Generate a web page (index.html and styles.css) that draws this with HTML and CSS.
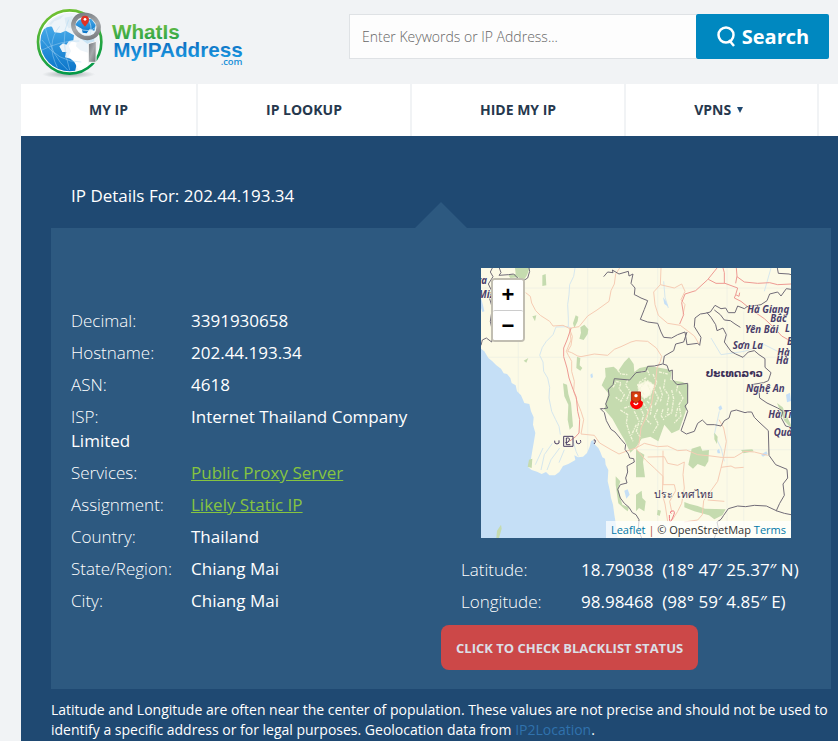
FILE: index.html
```html
<!DOCTYPE html>
<html lang="en">
<head>
<meta charset="utf-8">
<title>IP Details For: 202.44.193.34</title>
<link rel="stylesheet" href="styles.css">
</head>
<body>
<header class="header">
  <a class="logo" href="#" aria-label="WhatIsMyIPAddress.com">
    <svg class="logo-art" viewBox="0 0 720 252" role="img" aria-label="WhatIsMyIPAddress.com">
      <defs>
        <linearGradient id="ring" x1="0" y1="0" x2="0.3" y2="1"><stop offset="0" stop-color="#7cc52f"/><stop offset="1" stop-color="#069a48"/></linearGradient>
        <linearGradient id="sea" x1="0" y1="0" x2="0" y2="1"><stop offset="0" stop-color="#45a8e8"/><stop offset="1" stop-color="#0873c8"/></linearGradient>
        <linearGradient id="green" x1="0" y1="0" x2="0" y2="1"><stop offset="0" stop-color="#7cc342"/><stop offset="1" stop-color="#1fa04a"/></linearGradient>
        <linearGradient id="blue" x1="0" y1="0" x2="0" y2="1"><stop offset="0" stop-color="#0a63b8"/><stop offset="1" stop-color="#1b9fe6"/></linearGradient>
        <linearGradient id="steel" x1="0" y1="0" x2="1" y2="1"><stop offset="0" stop-color="#707479"/><stop offset=".5" stop-color="#a6a9ac"/><stop offset="1" stop-color="#6f7276"/></linearGradient>
        <radialGradient id="shade"><stop offset="0" stop-color="#8f969b" stop-opacity=".8"/><stop offset="1" stop-color="#8f969b" stop-opacity="0"/></radialGradient>
        <clipPath id="globe"><circle cx="149" cy="126" r="88"/></clipPath>
      </defs>
      <ellipse cx="146" cy="223" rx="80" ry="12" fill="url(#shade)"/>
      <circle cx="149" cy="126" r="95" fill="#fff" stroke="url(#ring)" stroke-width="8"/>
      <g clip-path="url(#globe)">
        <circle cx="149" cy="126" r="88" fill="#edf4f9"/>
        <path d="M58 112L72 88Q82 78 96 80L103 97L122 99L137 92L162 106L160 121L147 123L139 134L129 130L118 139L127 156L139 156L135 172L152 176L170 192L164 220L112 216L74 192L56 151Z" fill="url(#sea)"/>
        <path d="M87 72Q105 50 132 45L121 57L103 64L93 75ZM134 53L158 48L158 81L146 85L136 69Z" fill="#ddebf4"/>
        <path d="M156 123L170 129L168 139L181 151L204 158L205 195L176 210L162 184L145 170L153 153L146 137Z" fill="#fff"/>
        <path d="M180 58Q204 72 220 104L226 142L200 130L180 115Z" fill="#c7e3f4"/>
        <path d="M66 120Q115 188 184 186M76 84Q95 170 144 211M119 79Q76 131 112 202M146 59Q118 112 149 210M64 151Q126 120 178 123" fill="none" stroke="#a8d6f4" stroke-width="2" opacity=".7"/>
      </g>
      <path d="M205 131L229 124L228 187L205 187Z" fill="url(#steel)" stroke="#f7f8f8" stroke-width="3"/>
      <ellipse cx="198" cy="79" rx="39" ry="34" transform="rotate(25 198 79)" fill="#eaf4fa" stroke="url(#steel)" stroke-width="13"/>
      <path d="M166 75Q174 56 191 56L214 57L227 75L223 92L209 88L200 100L188 98L185 86Z" fill="url(#sea)"/>
      <path d="M175 85Q207 100 227 82M203 55Q218 76 211 104" fill="none" stroke="#c5e5f6" stroke-width="2"/>
      <path d="M195 80C187 70 183 66 183 59A12 12 0 0 1 207 59C207 66 203 70 195 80Z" fill="#df3124"/>
      <circle cx="195" cy="58" r="4" fill="#fff"/>
      <text class="logo-word" x="276" y="116" fill="url(#green)">WhatIs</text>
      <text class="logo-word" x="280" y="170" fill="url(#blue)">MyIPAddress</text>
      <text class="logo-com" x="602" y="194" fill="#168fd8">.com</text>
    </svg>
  </a>
  <form class="search">
    <input class="search-input" type="text" aria-label="Search" placeholder="Enter Keywords or IP Address...">
    <button class="search-button" type="button">
      <svg class="search-icon" viewBox="0 0 20 22" aria-hidden="true"><circle cx="10" cy="9" r="7.5"/><path d="M13 14L18 20"/></svg>
      Search
    </button>
  </form>
</header>
<nav class="nav">
  <a href="#">MY IP</a>
  <a href="#">IP LOOKUP</a>
  <a href="#">HIDE MY IP</a>
  <a class="has-menu" href="#">VPNS <span class="caret"></span></a>
</nav>
<main class="details">
  <h1 class="title">IP Details For: 202.44.193.34</h1>
  <section class="panel">
    <div class="facts">
      <p><span class="label">Decimal:</span>3391930658</p>
      <p><span class="label">Hostname:</span>202.44.193.34</p>
      <p><span class="label">ASN:</span>4618</p>
      <p><span class="label">ISP:</span>Internet Thailand Company Limited</p>
      <p><span class="label">Services:</span><a href="#">Public Proxy Server</a></p>
      <p><span class="label">Assignment:</span><a href="#">Likely Static IP</a></p>
      <p><span class="label">Country:</span>Thailand</p>
      <p><span class="label">State/Region:</span>Chiang Mai</p>
      <p><span class="label">City:</span>Chiang Mai</p>
    </div>
    <div class="place">
      <div class="map">
        <svg class="map-art" viewBox="0 0 930 810" preserveAspectRatio="xMidYMid slice" role="img" aria-label="Map of Thailand">
          <rect width="930" height="810" fill="#fcfae6"/>
          <g class="grid"><path d="M112 0V400M320 0V560M530 0V810M738 0V810M0 268H930M0 60H930M465 545H930M788 130V810"/></g>
          <path class="water" d="M0 242L10 250L22 270L34 280L46 292L60 302L68 316L78 318L88 330L92 345L104 352L108 370L120 382L130 405L145 408L150 430L158 448L156 470L163 495L158 525L154 548L150 572L141 597L152 606L168 611L182 618L195 612L205 622L222 622L235 612L246 594L262 588L283 576L280 562L291 568L306 566L318 555L326 536L330 520L336 516L342 530L352 540L358 552L364 568L372 572L374 590L382 606L380 640L386 665L390 690L396 710L400 740L404 765L410 810L0 810Z"/>
          <path class="water" d="M96 402L104 412L113 404L112 398ZM0 90L6 112L10 130L4 132L0 120Z"/>
          <g class="stream"><path d="M282 0L278 25L266 50L264 80L260 110L262 150L262 176L225 177L216 200L196 220L184 238L176 262L186 282L188 310L200 330L206 358L204 390L212 430L224 455L234 475L238 500M262 176L272 182M214 526L190 560L180 606M236 540L210 575L198 606M250 545L234 584M186 540L163 590M274 510L285 550L292 565M548 40L552 88L562 120M690 210L720 260L790 250L850 230L910 260M715 430L700 500L720 540L730 580M870 0L850 70"/></g>
          <path class="pond" d="M328 320l6-4 2 12-6 2zM712 418l8-6 4 10-8 6zM708 548l6-6 4 14-8 0zM840 560l16-10 4 8-14 8zM430 668l10-4 6 16-10 12zM472 690l8 4 2 22-8-4zM915 380l12-6 3 25-12 4zM546 88l8 10 8 18-12-8z"/>
          <g class="forest">
            <path d="M102 0H146L138 22L126 40L112 28L88 30L82 22L104 18Z"/>
            <path d="M184 22L194 18L196 52L184 54ZM284 142L292 146L290 160L280 180L276 166ZM298 178L310 170L322 184L320 198L308 216L295 212L300 194ZM288 266L298 270L296 292L304 300L298 308L286 300ZM246 346L258 350L262 378L270 405L276 475L266 485L260 455L262 410L250 385ZM154 145L166 142L162 160ZM128 278L142 270L136 284ZM144 575L154 572L152 600L140 596ZM46 810L48 788L60 770L62 782L54 810Z"/>
            <path d="M362 352L374 326L372 300L398 296L412 308L430 282L444 268L458 288L460 312L476 300L506 294L560 304L572 310L568 336L604 342L622 350L620 390L614 430L595 485L572 496L550 470L532 520L508 506L482 512L466 536L448 554L430 515L414 488L394 452L370 424L382 376Z"/>
            <path d="M404 625L418 640L412 660L418 690L424 710L444 718L440 730L430 722L412 706L404 650ZM465 545L490 560L486 582L492 628L465 628ZM632 542L658 534L664 548L684 546L682 580L672 596L650 588L636 602L622 590ZM610 702L626 708L650 714L672 722L734 724L724 742L700 754L684 742L640 730L610 718ZM700 494l10 12-2 22-8-14zM780 546l34-2 4 6-30 6z"/>
            <path d="M465 680L482 668L484 690L494 700L490 730L474 720L465 730ZM888 405L905 418L920 450L930 470L930 480L910 458ZM530 725l10 3-4 16-8-4z"/>
          </g>
          <g class="clearing"><path d="M470 350L500 338L520 352L508 380L490 392L474 372Z" fill="#fcfae6"/><path d="M396 358L406 340L420 344L414 362L430 380L420 400L404 388M440 336L434 352L448 370L436 398M474 344L494 330L490 345L476 362L490 380M516 318L528 344L518 362L532 390L522 412M552 334L548 360L564 384L558 412M572 366L578 392L572 434L550 448M488 406L502 430L496 455L512 470M530 424L520 446L532 468L516 494M418 426L440 440L436 464L446 498L456 520M460 430L474 460L466 490L480 510M484 394L476 415L488 440L480 470M594 370L606 390L594 410L600 444L580 465M500 350L510 370L506 395M464 385L452 405L460 425M546 424L540 442L550 458M430 420L448 414M410 306L420 318L440 320M480 312L500 308L506 322M534 312L560 318M590 352L586 372M536 356L544 380L538 400M562 420L558 440M498 400L512 412L508 440M590 420L584 446M466 470L452 500"/></g>
          <g class="road minor"><path d="M134 74L148 85L152 105L164 128L178 142L206 160L216 174L246 172L265 181L294 176L320 144L348 126L384 100L390 68L400 48L404 18L416 0M265 181L274 205L270 232L260 250L272 254L290 264L300 266L340 258L380 262L400 244L420 236L450 222L465 218L500 220L526 240L542 265L538 280L528 300L524 340L516 380L512 405L496 446L480 480L474 528L465 542M265 181L270 216L256 250L262 262L272 280L272 310L280 340L278 370L290 405L300 430L308 455L300 498L340 502L356 525L390 545L414 558L440 548L465 540L490 526L530 536L560 534L590 548L616 546L650 560L690 564L720 568L760 568L790 550L820 552L860 562M540 0L538 50L518 72L522 110L532 142L560 166L598 172L640 204L654 228M538 50L580 60L602 48L612 70L600 95L612 110L606 140M465 542L494 576L520 600L546 625L544 680L552 708L560 760M546 548L546 650L580 650L584 668L566 700L572 730M500 567L550 566L560 586L590 592L610 582L606 620L610 660L602 706L590 730L574 756M714 455L728 480L736 520L728 566L720 600L710 640L690 668L668 698L664 740L650 756L610 762M720 598L750 594L762 600L788 598M680 696L730 700"/></g>
          <g class="road main"><path d="M270 181L258 216L248 240L248 266L258 300L264 330L276 364L286 388L290 430L296 455L294 495L284 506L265 520M596 168L608 140L602 104L612 78L644 68L680 35L708 0M682 34L705 46L732 46L770 60L764 80L760 90L780 100L812 126L850 152L882 182L902 204L930 220M726 0L730 14V45M766 0L768 24L764 46M768 26L790 42L830 46L866 44L890 50L930 48M764 80L774 85L776 74"/></g>
          <g class="border"><path d="M0 232L4 216L16 210L32 222L36 198L28 160L34 120L26 92L32 68L22 48L36 26L28 12L34 0M55 0L60 14L54 22L82 20L98 18L110 30L124 40L140 30L146 10L144 0M368 26L380 12L396 14L394 6L414 18L442 10L444 24L456 18L450 46L462 60L460 80L465 82L480 90L500 98L490 124L478 154L500 162L530 166L540 192L548 208L572 210L590 200L612 192L618 230L650 226L656 232L660 208L640 176L642 150L658 138L672 136L688 132L702 112L720 122L734 120L742 134L762 134L770 114L790 122L798 116M798 116L840 110L858 98L866 78L890 72L900 84L916 62L930 64M678 134L690 148L704 170L708 188L726 180L736 200L730 222L750 250L764 258L786 268L802 252L820 248L834 260L852 272L852 298L870 314L862 338L848 344L810 350L834 370L836 390L858 405L890 420L906 430L900 448L914 474L930 478M700 126L718 140L730 156L748 158L762 168L778 178M889 0L892 16L924 18L930 20M618 192L608 222L584 228L578 248L550 264L546 288L558 292L564 310L574 306L574 334L588 350L620 346L620 405L612 414L620 430L610 460L600 488L616 498L640 490L650 466L664 456L678 470L700 470L720 474L730 458L744 450L750 430L766 426L792 434L800 432L812 432L820 448L834 462L862 488L864 562L884 590L918 604L920 630L906 648L910 682L896 706L886 728L856 714L820 712L794 716L770 714L742 722L728 742L720 754L708 762L712 780L700 810M545 288L520 294L500 295L494 310L465 314L446 336L400 332L396 350L382 364L384 382L374 408L380 420L368 422L358 422L370 434L376 458L390 484L402 492L420 514L434 530L432 544L442 558L446 570L458 572L460 582L438 594L440 612L434 630L438 645L418 650L410 664L418 690L430 706L444 718L454 734L465 740L474 755L472 785L482 810M885 728L910 736L930 740"/></g>
          <g class="place-name">
            <text x="-14" y="48">va</text><text x="-8" y="90">Miz</text>
            <text x="799" y="136">Hà Giang</text><text x="868" y="163">Bắc</text>
            <text x="792" y="195">Yên Bái</text><text x="912" y="191">L</text>
            <text x="755" y="243">Sơn La</text><text x="918" y="231">B</text>
            <text x="889" y="263">Hà</text><text x="885" y="288">Hà</text>
            <text x="795" y="373">Nghệ An</text><text x="862" y="449">Hà Tĩ</text><text x="878" y="504">Quả</text>
          </g>
          <text class="country" x="674" y="328">ປະເທດລາວ</text>
          <text class="country thai" x="520" y="690">ประ เทศไทย</text>
          <g class="glyphs"><path d="M248 505h28v30h-28zM256 510v20h12M255 511q12-4 10 5t-12 8M221 518q-2 10 7 10t6-11M286 517q-2 11 7 10t5-11M338 516q5-2 5 3t-4 9"/></g>
          <path d="M571 737q-8-6 2-8t6 10-9 20-5-18" fill="none" stroke="#ee7880" stroke-width="3"/>
          <path d="M451 371H479V396L486 403A18 18 0 1 1 447 405L451 396Z" fill="#f00"/>
          <path d="M452 372H478V396L465 406L452 396Z" fill="#d9400c" stroke="#8d241c" stroke-width="2"/>
          <circle cx="465" cy="383" r="5" fill="#fff"/><path d="M458 405q8 10 13-1" fill="none" stroke="#fff" stroke-width="4"/>
        </svg>
        <div class="zoom"><button type="button" aria-label="Zoom in">+</button><button type="button" aria-label="Zoom out">−</button></div>
        <div class="credit"><a href="#">Leaflet</a> <span>|</span> © OpenStreetMap <a href="#">Terms</a></div>
      </div>
      <div class="coords">
        <p><span class="label">Latitude:</span>18.79038&nbsp; (18° 47′ 25.37″ N)</p>
        <p><span class="label">Longitude:</span>98.98468&nbsp; (98° 59′ 4.85″ E)</p>
      </div>
      <button class="blacklist" type="button">CLICK TO CHECK BLACKLIST STATUS</button>
    </div>
  </section>
  <p class="note">Latitude and Longitude are often near the center of population. These values are not precise and should not be used to identify a specific address or for legal purposes. Geolocation data from <a href="#">IP2Location</a>.</p>
</main>
</body>
</html>
```
FILE: styles.css
```css
* { box-sizing: border-box; }
body { margin: 0; padding-left: 21px; background: #f1f3f5; font-family: "Open Sans", sans-serif; color: #fff; overflow-x: hidden; }
p { margin: 0; }

.header { display: flex; align-items: flex-start; gap: 88px; height: 84px; padding-right: 9px; }
.logo { flex: none; margin-left: -1px; margin-right: 1px; }
.logo-art { display: block; width: 240px; height: 84px; }
.logo-word { font-family: "Liberation Sans", sans-serif; font-size: 62px; font-weight: 700; }
.logo-com { font-family: "Open Sans", sans-serif; font-size: 28px; font-weight: 600; }
.search { flex: 1; display: flex; height: 45px; margin-top: 14px; }
.search-input { flex: 1; min-width: 0; padding: 0 12px; border: 1px solid #dfe2e5; border-right: 0; background: #fdfdfd; font: 300 14px "Open Sans", sans-serif; color: #444; }
.search-input::placeholder { color: #666; opacity: 1; }
.search-button { display: flex; align-items: center; justify-content: center; gap: 6px; width: 133px; padding: 0; border: 0; border-radius: 2px; background: #0088c0; color: #fff; font: 700 20px "Open Sans", sans-serif; }
.search-icon { width: 20px; height: 22px; fill: none; stroke: #fff; stroke-width: 2.5; }

.nav { display: flex; height: 52px; background: #fff; overflow: hidden; }
.nav a { flex: none; display: flex; align-items: center; padding: 0 68px 2px; border-right: 2px solid #f1f3f5; color: #26384d; font-size: 14px; font-weight: 700; text-decoration: none; }
.nav .has-menu { padding-right: 74px; }
.caret { margin: 2px 0 0 6px; border: 3px solid transparent; border-top: 6px solid #1f4972; border-bottom: 0; }

.details { min-height: 605px; padding: 48px 7px 0 30px; background: #1f4972; }
.title { margin: 0 0 20px; padding-left: 20px; font-size: 17px; line-height: 24px; font-weight: 400; }
.panel { position: relative; display: grid; grid-template-columns: 1fr 1fr; padding: 40px 0 19px; background: #2d5980; font-size: 17px; line-height: 24px; }
.panel::before { content: ""; position: absolute; bottom: 100%; left: 50%; margin-left: -26px; border: 26px solid transparent; border-top: 0; border-bottom-color: #2d5980; }
.facts { padding: 41px 20px 0; }
.facts p, .coords p { margin-bottom: 8px; }
.label { display: inline-block; width: 120px; font-weight: 300; }
.facts a { color: #86c440; text-decoration: underline; }

.map { position: relative; height: 270px; margin: 0 40px 20px; overflow: hidden; background: #fcfae6; }
.map-art { display: block; width: 100%; height: 100%; }
.water { fill: #c5dff6; }
.pond { fill: #c5dff6; }
.forest { fill: #c5dbaf; }
.grid, .stream, .border, .road, .clearing, .glyphs { fill: none; stroke-linejoin: round; }
.grid { stroke: #eceee4; stroke-width: 2; }
.stream { stroke: #d6e7ee; stroke-width: 3; }
.clearing { stroke: #f3f5da; stroke-width: 4; stroke-dasharray: 9 3 4 3; }
.minor { stroke: #f6ccb4; stroke-width: 3; }
.main { stroke: #ee9a93; stroke-width: 3; }
.border { stroke: #716c78; stroke-width: 3; }
.glyphs { stroke: #4a3e63; stroke-width: 3; }
.place-name { fill: #4a3e6b; stroke: #fcfae6; stroke-width: 3; paint-order: stroke; font: italic 700 29px "Noto Sans", sans-serif; }
.country { fill: #3c3058; stroke: #fcfae6; stroke-width: 4; paint-order: stroke; font: 700 31px "DejaVu Sans", sans-serif; }
.thai { font-weight: 400; }
.zoom { position: absolute; top: 10px; left: 10px; display: grid; border: 2px solid #c1beb2; border-radius: 4px; background: #fff; }
.zoom button { width: 30px; height: 30px; padding: 0; border: 0; border-radius: 2px; background: #fff; color: #000; font: 700 22px/30px "Liberation Sans", sans-serif; }
.zoom button + button { border-top: 1px solid #ccc; }
.credit { position: absolute; right: 0; bottom: 0; padding: 0 5px; background: rgba(255, 255, 255, .7); color: #333; font-size: 11px; line-height: 17px; white-space: nowrap; }
.credit a { color: #0078a8; text-decoration: none; }
.credit span { color: #b5533c; }

.coords { padding: 0 20px; white-space: nowrap; }
.blacklist { display: block; height: 45px; margin-top: 11px; padding: 0 15px; border: 0; border-radius: 8px; background: #cc4848; color: #dbdfe6; font: 700 13px "Open Sans", sans-serif; }
.coords p:last-child { margin-bottom: 0; }
.note { margin-top: 11px; font-size: 14px; line-height: 20px; }
.note a { color: #3072ad; text-decoration: none; }
```
